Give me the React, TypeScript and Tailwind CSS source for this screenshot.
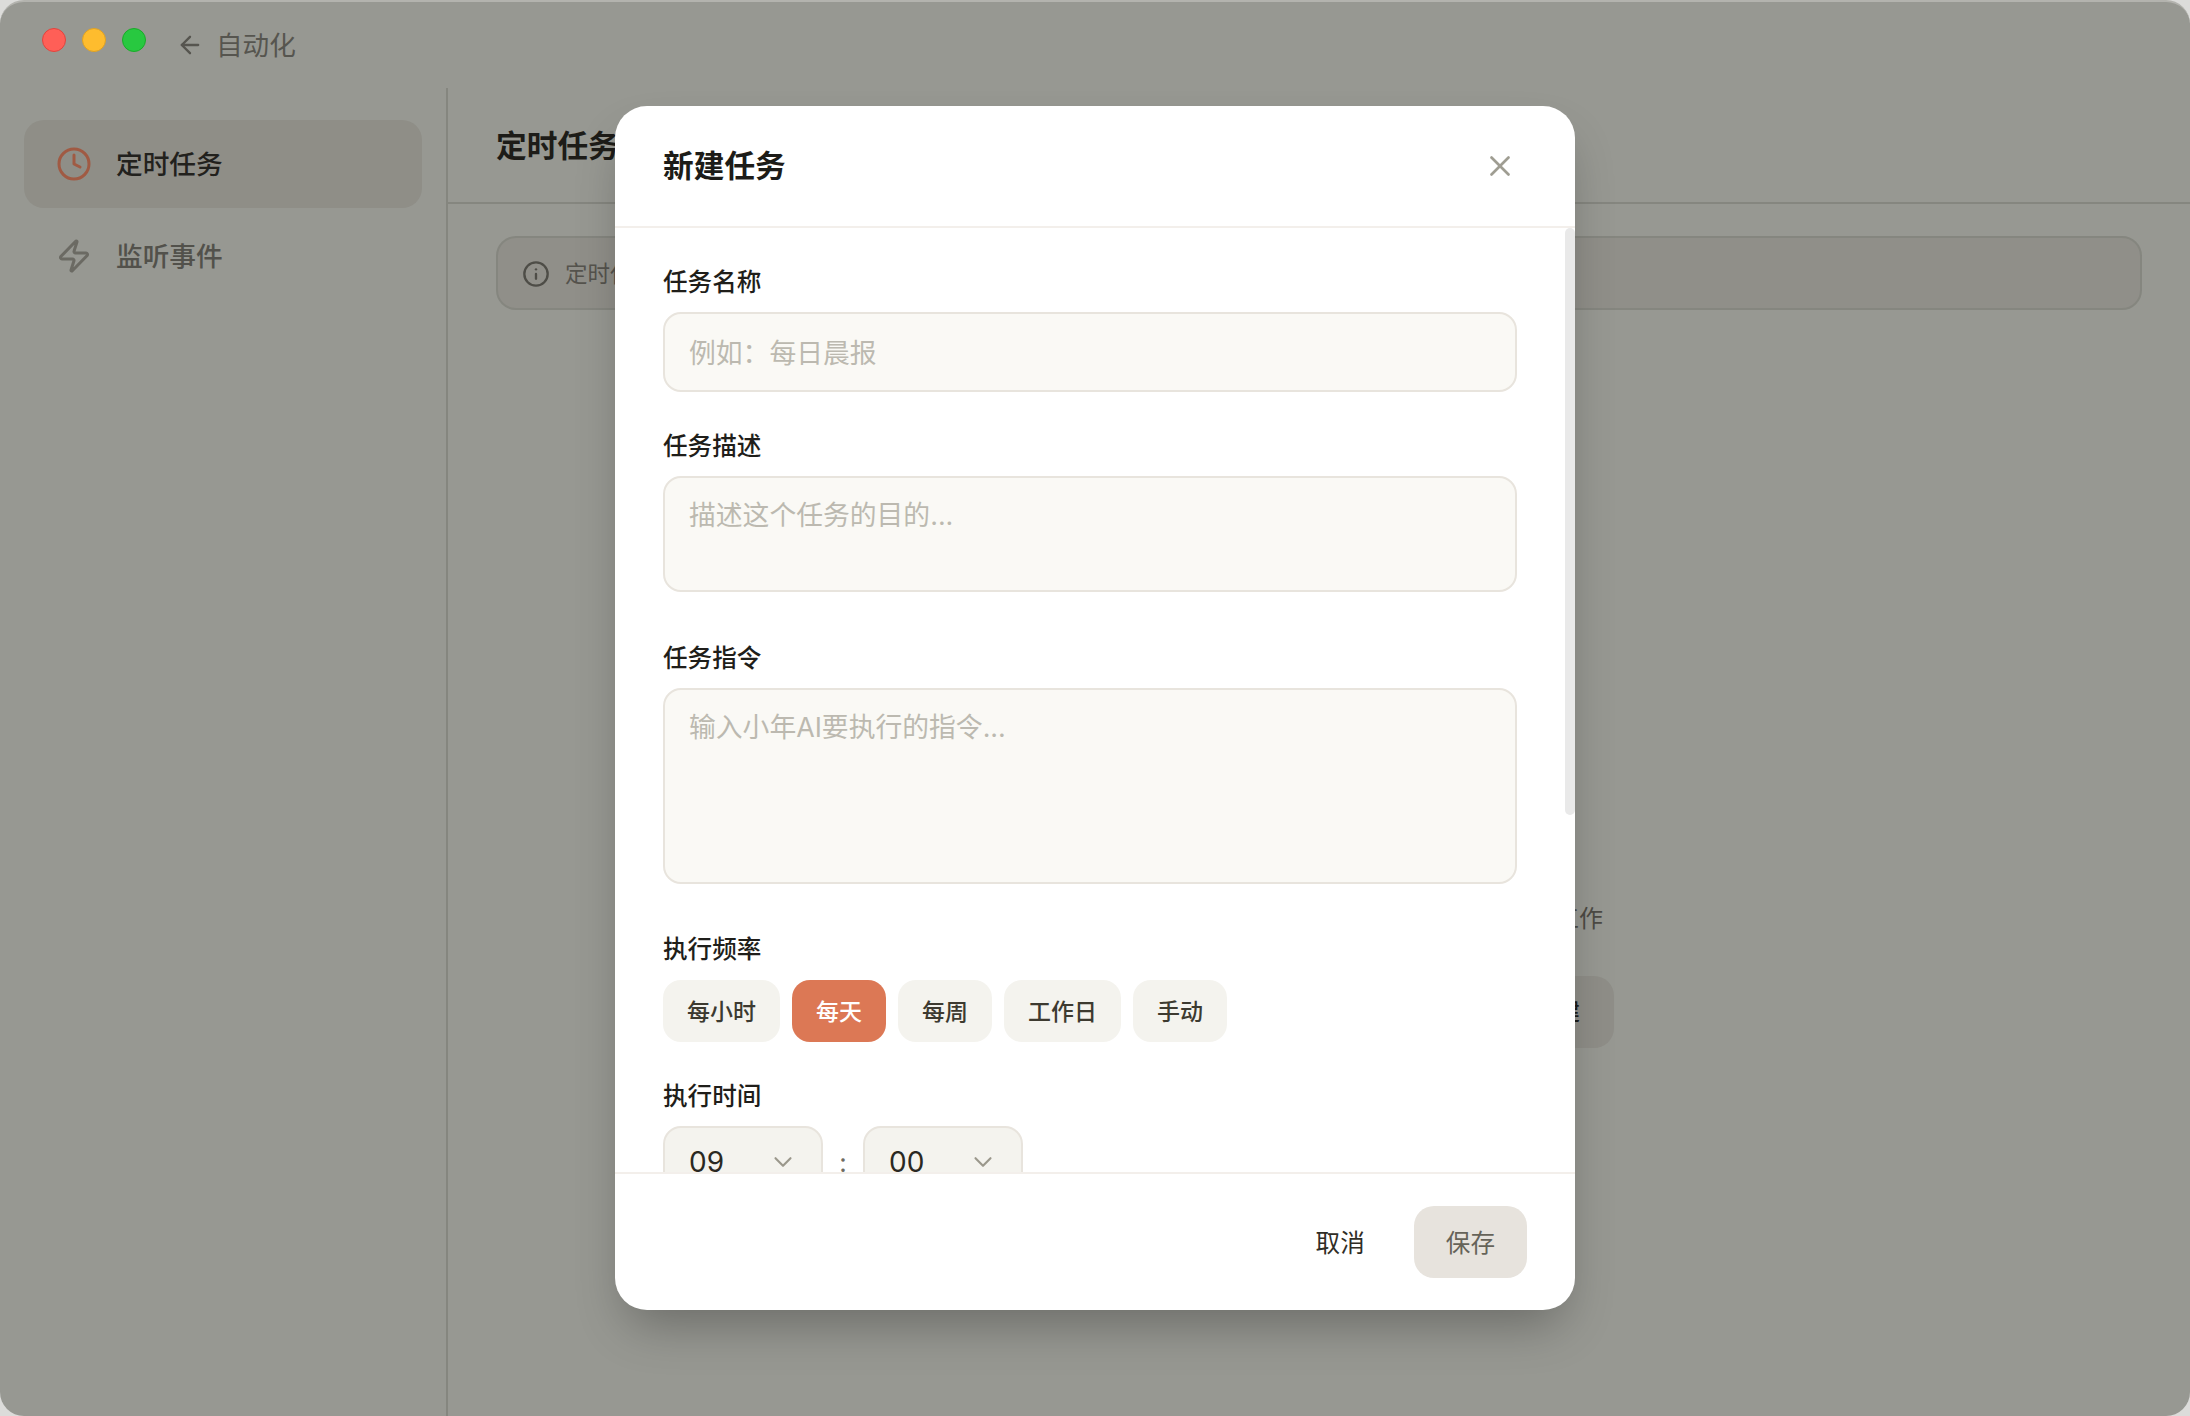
import { ArrowLeft, ChevronDown, Clock, Info, X, Zap } from "lucide-react";

function Field({ label, children, className = "" }: { label: string; children: React.ReactNode; className?: string }) {
  return (
    <div className={className}>
      <div className="mb-[12px] text-[24.6px] leading-[36px] font-medium text-[#1f1e1a]">{label}</div>
      {children}
    </div>
  );
}

function Box({ text, h }: { text: string; h: string }) {
  return (
    <div className={`${h} rounded-[18px] border-2 border-[#e8e4dd] bg-[#faf9f5] px-[24px] pt-[19px] text-[26.8px] leading-[36px] text-[#bcb9b0]`}>
      {text}
    </div>
  );
}

function Pick({ text }: { text: string }) {
  return (
    <div className="flex h-[72px] w-[160px] items-center justify-between rounded-[18px] border-2 border-[#e8e4dd] bg-[#f4f3ee] pl-[24px] pr-[23px] text-[28px] text-[#2a2822]">
      <span>{text}</span>
      <ChevronDown size={30} strokeWidth={1.7} className="text-[#9b988c]" />
    </div>
  );
}

const freq = ["每小时", "每天", "每周", "工作日", "手动"];

export default function App() {
  return (
    <div className="h-[1416px] w-[2190px] overflow-hidden bg-[#dcdcda] font-[Inter,'Noto_Sans_CJK_SC',sans-serif]">
      <div className="relative flex h-full w-full flex-col overflow-hidden rounded-[24px] border-t-2 border-[#b3b3ae] bg-[#979892]">
        <div className="flex h-[86px] shrink-0 items-start px-[42px] pt-[26px]">
          <div className="flex gap-[16px]">
            <div className="h-[24px] w-[24px] rounded-full border border-[#e0443e] bg-[#ff5f57]" />
            <div className="h-[24px] w-[24px] rounded-full border border-[#dea123] bg-[#febc2e]" />
            <div className="h-[24px] w-[24px] rounded-full border border-[#1aab29] bg-[#28c840]" />
          </div>
          <div className="ml-[30px] -mt-[1px] flex items-center gap-[12px] text-[26.6px] leading-[36px] text-[#56554f]">
            <ArrowLeft size={28} strokeWidth={2} />
            <span>自动化</span>
          </div>
        </div>

        <div className="flex min-h-0 flex-1">
          <aside className="flex w-[448px] shrink-0 flex-col gap-[4px] border-r-2 border-[#85867f] pl-[24px] pr-[24px] pt-[32px]">
            <div className="flex h-[88px] items-center gap-[24px] rounded-[20px] bg-[#8f8e87] pl-[32px] text-[26.7px] font-medium text-[#22211d]">
              <Clock size={36} strokeWidth={2} className="text-[#a05a43]" />
              <span>定时任务</span>
            </div>
            <div className="flex h-[88px] items-center gap-[24px] rounded-[20px] pl-[32px] text-[26.7px] font-medium text-[#52514b]">
              <Zap size={36} strokeWidth={2} className="text-[#6b6a63]" />
              <span>监听事件</span>
            </div>
          </aside>

          <main className="flex min-w-0 flex-1 flex-col">
            <div className="flex h-[116px] shrink-0 items-start border-b-2 border-[#85867f] pl-[48px] pt-[37px] text-[30.7px] leading-[42px] font-semibold text-[#1d1c18]">
              定时任务
            </div>
            <div className="mx-[48px] mt-[32px] flex h-[74px] items-center gap-[15px] rounded-[20px] border-2 border-[#85867f] bg-[#908f89] pl-[24px] pt-[2px] text-[22.5px] text-[#55534d]">
              <Info size={28} strokeWidth={2} className="text-[#4e4d47]" />
              <span>定时任务将在应用运行时自动执行</span>
            </div>
            <div className="mx-auto mt-[591px] flex w-[590px] flex-col items-end">
              <div className="pr-[11px] text-[24px] leading-[36px] text-[#4c4a44]">创建定时任务，让小年AI按时帮你完成工作</div>
              <div className="mt-[39px] flex h-[72px] items-center rounded-[20px] bg-[#8f8e88] px-[34px] text-[24px] font-medium text-[#1d1c18]">
                立即新建
              </div>
            </div>
          </main>
        </div>

        <div className="absolute left-[615px] top-[104px] flex h-[1204px] w-[960px] flex-col overflow-hidden rounded-[32px] bg-white shadow-[0_25px_50px_-12px_rgba(0,0,0,0.3)]">
          <div className="flex h-[122px] shrink-0 items-center justify-between border-b-2 border-[#f3efeb] pl-[48px] pr-[58px] text-[30.7px] font-semibold text-[#1d1c18]">
            <span>新建任务</span>
            <X size={34} strokeWidth={1.9} className="text-[#9f9d92]" />
          </div>

          <div className="relative min-h-0 flex-1 overflow-hidden">
            <div className="flex flex-col pl-[48px] pr-[58px] pt-[36px]">
              <Field label="任务名称" className="mb-[36px]">
                <div className="flex h-[80px] items-center rounded-[18px] border-2 border-[#e8e4dd] bg-[#faf9f5] px-[24px] pt-[2px] text-[26.8px] text-[#bcb9b0]">
                  例如：每日晨报
                </div>
              </Field>
              <Field label="任务描述" className="mb-[48px]">
                <Box text="描述这个任务的目的..." h="h-[116px]" />
              </Field>
              <Field label="任务指令" className="mb-[47px]">
                <Box text="输入小年AI要执行的指令..." h="h-[196px]" />
              </Field>
              <Field label="执行频率" className="mb-[36px]">
                <div className="mt-[13px] flex gap-[12px]">
                  {freq.map((f) => (
                    <div
                      key={f}
                      className={
                        f === "每天"
                          ? "flex h-[62px] items-center rounded-[18px] bg-[#dc7855] px-[24px] pt-[2px] text-[23px] font-medium text-white"
                          : "flex h-[62px] items-center rounded-[18px] bg-[#f4f3ee] px-[24px] pt-[2px] text-[23px] font-medium text-[#3d3a30]"
                      }
                    >
                      {f}
                    </div>
                  ))}
                </div>
              </Field>
              <Field label="执行时间">
                <div className="flex items-center">
                  <Pick text="09" />
                  <div className="w-[40px] text-center text-[26px] text-[#6f6c62]">:</div>
                  <Pick text="00" />
                </div>
              </Field>
            </div>
            <div className="absolute right-0 top-0 h-[587px] w-[10px] rounded-full bg-[#e9e9e9]" />
          </div>

          <div className="flex h-[138px] shrink-0 items-start justify-end gap-[17px] border-t-2 border-[#f3efeb] pr-[48px] pt-[32px] text-[24.6px]">
            <div className="flex h-[72px] items-center px-[32px] pt-[2px] text-[#2f2d26]">取消</div>
            <div className="flex h-[72px] items-center rounded-[20px] bg-[#e7e3dd] px-[32px] pt-[2px] text-[#666359]">保存</div>
          </div>
        </div>
      </div>
    </div>
  );
}
